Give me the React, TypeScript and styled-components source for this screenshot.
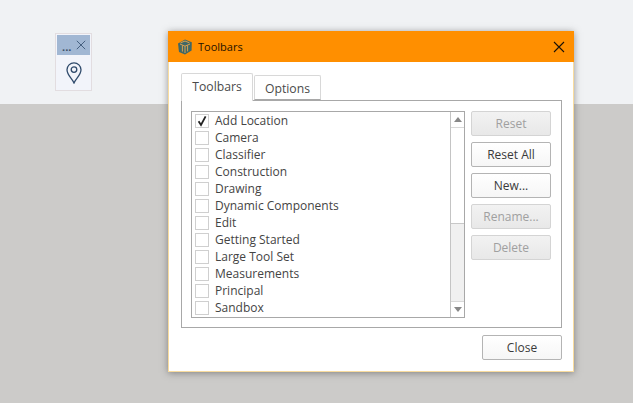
import React from 'react'
import styled, { createGlobalStyle } from 'styled-components'

const GlobalStyle = createGlobalStyle`
  html, body {
    margin: 0;
    padding: 0;
    background: #cccbc9;
  }
  body {
    font-family: "Open Sans", "Noto Sans", sans-serif;
    overflow: hidden;
  }
`

const Page = styled.div`
  position: relative;
  width: 633px;
  height: 403px;
  overflow: hidden;
  display: flex;
  flex-direction: column;
`

const TopBand = styled.div`
  height: 104px;
  background: #f0f2f4;
`

const Workspace = styled.div`
  flex: 1;
  background: #cccbc9;
`

const FloatBar = styled.div`
  position: absolute;
  left: 55px;
  top: 33px;
  width: 37px;
  height: 58px;
  box-sizing: border-box;
  border: 1px solid #e2dde0;
  background: #f2f4fa;
  padding: 1px;
`

const FloatHeader = styled.div`
  height: 20px;
  background: #a1b7d3;
  display: flex;
  align-items: flex-start;
  justify-content: space-between;
  padding: 0 4px 0 5px;
  color: #3c4f66;
`

const Dots = styled.span`
  font-size: 11px;
  font-weight: 700;
  line-height: 24px;
`

const PinSlot = styled.div`
  display: flex;
  justify-content: center;
  padding-top: 7px;
`

const Dialog = styled.div`
  position: absolute;
  left: 168px;
  top: 31px;
  width: 406px;
  height: 341px;
  box-sizing: border-box;
  border: 1px solid #f9dc9e;
  border-top: none;
  background: #fff;
  box-shadow: 0 1px 7px rgba(70, 70, 70, 0.55);
  display: flex;
  flex-direction: column;
`

const TitleBar = styled.div`
  height: 31px;
  margin: 0 -1px;
  background: #ff8f00;
  display: flex;
  align-items: center;
  padding: 0 9px;
  gap: 5px;
  flex-shrink: 0;
`

const TitleText = styled.span`
  flex: 1;
  font-size: 11px;
  color: #241200;
`

const Body = styled.div`
  flex: 1;
  display: flex;
  flex-direction: column;
  padding: 10px 11px 11px 12px;
`

const TabRow = styled.div`
  display: flex;
  align-items: flex-end;
  gap: 1px;
  height: 28px;
  position: relative;
  z-index: 1;
`

const Tab = styled.div<{ $active?: boolean }>`
  box-sizing: border-box;
  height: ${p => (p.$active ? 28 : 25)}px;
  margin-bottom: ${p => (p.$active ? -1 : 0)}px;
  width: ${p => (p.$active ? 72 : 67)}px;
  background: #fff;
  border: 1px solid #d8d8d8;
  border-bottom: ${p => (p.$active ? 'none' : '1px solid #a8a8a8')};
  border-radius: 2px 2px 0 0;
  color: #4a4a4a;
  font-size: 12.2px;
  line-height: ${p => (p.$active ? 26 : 25)}px;
  text-align: center;
`

const Panel = styled.div`
  box-sizing: border-box;
  width: 381px;
  height: 228px;
  border: 1px solid #a8a8a8;
  padding: 10px 10px 9px 9px;
  display: flex;
  gap: 6px;
`

const List = styled.div`
  box-sizing: border-box;
  width: 274px;
  height: 207px;
  border: 1px solid #a8a8a8;
  display: flex;
  overflow: hidden;
`

const Rows = styled.div`
  flex: 1;
  padding: 0 0 0 3px;
  overflow: hidden;
`

const Row = styled.div`
  height: 17px;
  display: flex;
  align-items: center;
  gap: 6px;
  font-size: 12px;
  color: #444;
`

const Box = styled.span`
  box-sizing: border-box;
  width: 14px;
  height: 14px;
  border: 1px solid #cfcfcf;
  background: #fff;
  display: flex;
  align-items: center;
  justify-content: center;
`

const ScrollBar = styled.div`
  box-sizing: border-box;
  width: 14px;
  border-left: 1px solid #c4c4c4;
  display: flex;
  flex-direction: column;
  background: #f0f0f0;
`

const ScrollArrow = styled.div`
  height: 15px;
  background: #fff;
  display: flex;
  align-items: center;
  justify-content: center;
`

const ScrollThumb = styled.div`
  height: 95px;
  background: #fff;
  border-top: 1px solid #d8d8d8;
  border-bottom: 1px solid #c8c8c8;
`

const ScrollTrack = styled.div`
  flex: 1;
  border-bottom: 1px solid #d8d8d8;
`

const Side = styled.div`
  display: flex;
  flex-direction: column;
  gap: 6px;
`

const Button = styled.button<{ $disabled?: boolean }>`
  box-sizing: border-box;
  width: 80px;
  height: 25px;
  padding: 0;
  border: 1px solid ${p => (p.$disabled ? '#d4d4d4' : '#b4b4b4')};
  border-radius: 2px;
  font-family: inherit;
  font-size: 12px;
  color: ${p => (p.$disabled ? '#a0a0a0' : '#3a3a3a')};
  background: ${p =>
    p.$disabled
      ? 'linear-gradient(#f2f2f2, #e8e8e8)'
      : 'linear-gradient(#ffffff, #f6f6f6)'};
`

const Footer = styled.div`
  display: flex;
  justify-content: flex-end;
  padding-top: 7px;
  width: 381px;
`

const toolbars = [
  'Add Location',
  'Camera',
  'Classifier',
  'Construction',
  'Drawing',
  'Dynamic Components',
  'Edit',
  'Getting Started',
  'Large Tool Set',
  'Measurements',
  'Principal',
  'Sandbox',
]

const sideButtons = [
  { label: 'Reset', disabled: true },
  { label: 'Reset All', disabled: false },
  { label: 'New...', disabled: false },
  { label: 'Rename...', disabled: true },
  { label: 'Delete', disabled: true },
]

const Logo = () => (
  <svg width="16" height="16" viewBox="0 0 16 16" fill="none">
    <path d="M8 .4 14.8 3.2 14.6 11.4 8 15.6 2 13 1 4.4Z" fill="#3f6766" />
    <path d="M3 5 8 7.2 13 5M8 7.2V14M5.4 6.2V12.6M10.6 6.2V12.4M3.6 3.8 8 2 12.4 3.8" stroke="#d7a050" strokeWidth="1" />
  </svg>
)

const App = () => {
  return (
    <Page>
      <GlobalStyle />
      <TopBand />
      <Workspace />

      <FloatBar>
        <FloatHeader>
          <Dots>...</Dots>
          <svg width="10" height="10" viewBox="0 0 10 10" style={{ marginTop: 5 }}>
            <path d="M.8.8 9.2 9.2M9.2.8.8 9.2" stroke="#45607f" strokeWidth="1" fill="none" />
          </svg>
        </FloatHeader>
        <PinSlot>
          <svg width="16" height="22" viewBox="0 0 16 22" fill="none" stroke="#2f4a6b" strokeWidth="1.3">
            <path d="M8 21C6 16.5 1 13 1 7.8a7 7 0 0 1 14 0C15 13 10 16.5 8 21Z" />
            <circle cx="8" cy="7.6" r="2.8" />
          </svg>
        </PinSlot>
      </FloatBar>

      <Dialog>
        <TitleBar>
          <Logo />
          <TitleText>Toolbars</TitleText>
          <svg width="12" height="12" viewBox="0 0 12 12">
            <path d="M1 1 11 11M11 1 1 11" stroke="#1a1208" strokeWidth="1.1" fill="none" />
          </svg>
        </TitleBar>
        <Body>
          <TabRow>
            <Tab $active>Toolbars</Tab>
            <Tab>Options</Tab>
          </TabRow>
          <Panel>
            <List>
              <Rows>
                {toolbars.map((name, i) => (
                  <Row key={name}>
                    <Box>
                      {i === 0 && (
                        <svg width="12" height="12" viewBox="0 0 12 12">
                          <path d="M2.6 6.2 5 10 9.6 1.4" stroke="#222" strokeWidth="1.8" fill="none" />
                        </svg>
                      )}
                    </Box>
                    {name}
                  </Row>
                ))}
              </Rows>
              <ScrollBar>
                <ScrollArrow>
                  <svg width="8" height="5" viewBox="0 0 8 5">
                    <path d="M4 0 8 5H0Z" fill="#888" />
                  </svg>
                </ScrollArrow>
                <ScrollThumb />
                <ScrollTrack />
                <ScrollArrow>
                  <svg width="8" height="5" viewBox="0 0 8 5">
                    <path d="M0 0H8L4 5Z" fill="#888" />
                  </svg>
                </ScrollArrow>
              </ScrollBar>
            </List>
            <Side>
              {sideButtons.map(b => (
                <Button key={b.label} $disabled={b.disabled}>
                  {b.label}
                </Button>
              ))}
            </Side>
          </Panel>
          <Footer>
            <Button>Close</Button>
          </Footer>
        </Body>
      </Dialog>
    </Page>
  )
}

export default App
